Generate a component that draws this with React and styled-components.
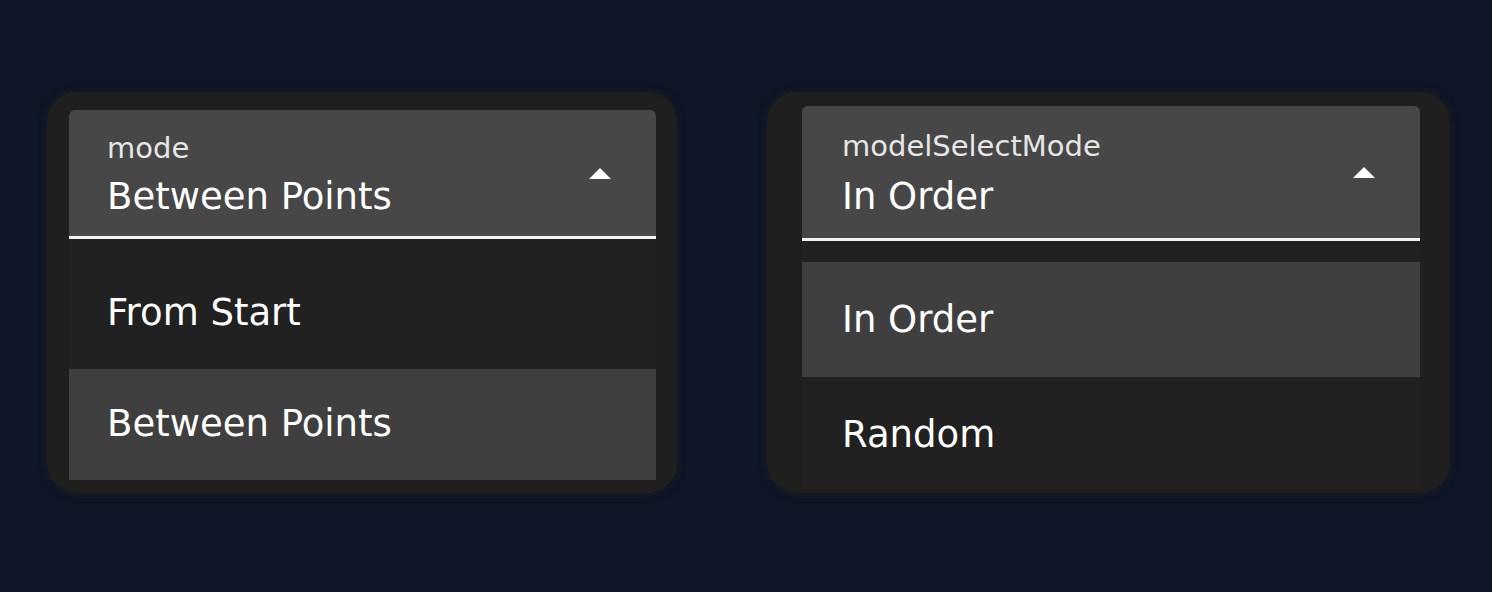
import React from "react";
import styled, { createGlobalStyle } from "styled-components";

const GlobalStyle = createGlobalStyle`
	body {
		margin: 0;
		background: #0e1627;
		font-family: "DejaVu Sans", Inter, sans-serif;
	}
`;

const Page = styled.div`
	display: flex;
	align-items: flex-start;
	gap: 90px;
	padding: 92px 0 0 47px;
	height: 592px;
	box-sizing: border-box;
`;

const Card = styled.div`
	width: ${(p) => p.$w}px;
	height: 401px;
	box-sizing: border-box;
	padding: ${(p) => p.$pad};
	background: #1f1f1f;
	border-radius: 30px;
	box-shadow: 0 0 6px 2px rgba(30, 30, 30, 0.6);
	display: flex;
	flex-direction: column;
`;

const Inner = styled.div`
	flex: 1;
	display: flex;
	flex-direction: column;
	overflow: hidden;
`;

const Field = styled.div`
	display: flex;
	align-items: center;
	height: ${(p) => p.$h}px;
	padding: 0 44px 0 ${(p) => p.$left}px;
	background: #474747;
	border-radius: 6px 6px 0 0;
	border-bottom: 3px solid #f2f2f2;
	flex-shrink: 0;
`;

const FieldText = styled.div`
	flex: 1;
	display: flex;
	flex-direction: column;
	padding-top: ${(p) => p.$top}px;
	align-self: flex-start;
`;

const Label = styled.div`
	font-size: 29px;
	line-height: 30px;
	color: #e6e6e6;
`;

const Value = styled.div`
	font-size: 37px;
	line-height: 40px;
	margin-top: ${(p) => p.$gap}px;
	color: #ffffff;
`;

const Arrow = styled.svg`
	width: 24px;
	height: 12px;
	fill: #ffffff;
	flex-shrink: 0;
`;

const Menu = styled.div`
	padding-top: ${(p) => p.$top}px;
	background: #212121;
	display: flex;
	flex-direction: column;
`;

const Item = styled.div`
	height: ${(p) => p.$h}px;
	flex-shrink: 0;
	display: flex;
	align-items: center;
	padding-left: ${(p) => p.$left}px;
	padding-bottom: ${(p) => p.$lift}px;
	box-sizing: border-box;
	font-size: 37px;
	color: #ffffff;
	background: ${(p) => (p.$selected ? "#3f3f3f" : "#212121")};
`;

function Select({ cfg }) {
	return (
		<Card $w={cfg.width} $pad={cfg.pad}>
			<Inner>
				<Field $h={cfg.fieldH} $left={cfg.textLeft}>
					<FieldText $top={cfg.labelTop}>
						<Label>{cfg.label}</Label>
						<Value $gap={cfg.valueGap}>{cfg.value}</Value>
					</FieldText>
					<Arrow viewBox="0 0 24 12">
						<path d="M1 12 L12 1 L23 12 Z" />
					</Arrow>
				</Field>
				<Menu $top={cfg.menuTop}>
					{cfg.options.map((o) => (
						<Item
							key={o}
							$h={cfg.itemH}
							$left={cfg.textLeft}
							$lift={cfg.itemLift}
							$selected={o === cfg.value}
						>
							{o}
						</Item>
					))}
				</Menu>
			</Inner>
		</Card>
	);
}

const selects = [
	{
		label: "mode",
		value: "Between Points",
		options: ["From Start", "Between Points"],
		width: 630,
		pad: "18px 21px 13px 22px",
		fieldH: 126,
		textLeft: 38,
		labelTop: 23,
		valueGap: 14,
		menuTop: 19,
		itemH: 111,
		itemLift: 2
	},
	{
		label: "modelSelectMode",
		value: "In Order",
		options: ["In Order", "Random"],
		width: 683,
		pad: "14px 30px 4px 35px",
		fieldH: 132,
		textLeft: 40,
		labelTop: 25,
		valueGap: 16,
		menuTop: 21,
		itemH: 115,
		itemLift: 0
	}
];

export default function App() {
	return (
		<>
			<GlobalStyle />
			<Page>
				{selects.map((s) => (
					<Select key={s.label} cfg={s} />
				))}
			</Page>
		</>
	);
}
